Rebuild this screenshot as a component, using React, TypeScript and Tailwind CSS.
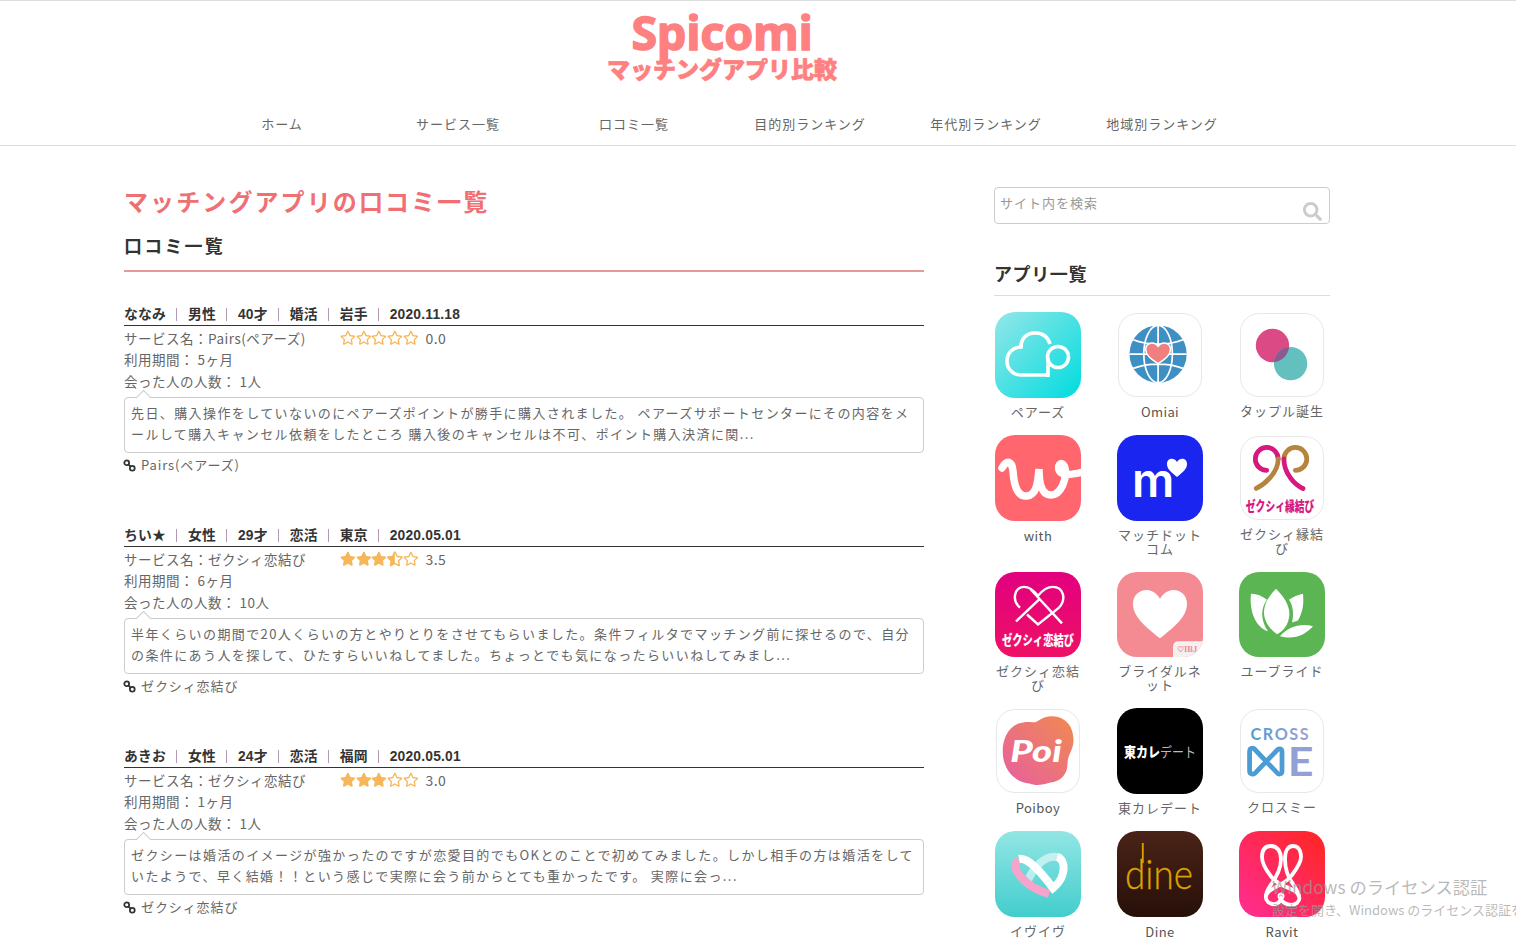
import type { FC, ReactNode } from "react";
import { FaRegStar, FaSearch, FaStar, FaStarHalfAlt } from "react-icons/fa";

const navItems = [
  "ホーム",
  "サービス一覧",
  "口コミ一覧",
  "目的別ランキング",
  "年代別ランキング",
  "地域別ランキング",
];

const reviews = [
  {
    meta: ["ななみ", "男性", "40才", "婚活", "岩手", "2020.11.18"],
    service: "Pairs(ペアーズ)",
    rating: 0,
    score: "0.0",
    period: "5ヶ月",
    people: "1人",
    body: "先日、購入操作をしていないのにペアーズポイントが勝手に購入されました。 ペアーズサポートセンターにその内容をメールして購入キャンセル依頼をしたところ 購入後のキャンセルは不可、ポイント購入決済に関...",
  },
  {
    meta: ["ちい★", "女性", "29才", "恋活", "東京", "2020.05.01"],
    service: "ゼクシィ恋結び",
    rating: 3.5,
    score: "3.5",
    period: "6ヶ月",
    people: "10人",
    body: "半年くらいの期間で20人くらいの方とやりとりをさせてもらいました。条件フィルタでマッチング前に探せるので、自分の条件にあう人を探して、ひたすらいいねしてました。ちょっとでも気になったらいいねしてみまし...",
  },
  {
    meta: ["あきお", "女性", "24才", "恋活", "福岡", "2020.05.01"],
    service: "ゼクシィ恋結び",
    rating: 3,
    score: "3.0",
    period: "1ヶ月",
    people: "1人",
    body: "ゼクシーは婚活のイメージが強かったのですが恋愛目的でもOKとのことで初めてみました。しかし相手の方は婚活をしていたようで、早く結婚！！という感じで実際に会う前からとても重かったです。 実際に会っ...",
  },
];

const Stars: FC<{ rating: number }> = ({ rating }) => (
  <div className="flex text-[#f5b75a]">
    {[1, 2, 3, 4, 5].map((n) => {
      if (rating >= n) return <FaStar key={n} className="h-[15.7px] w-[15.7px]" />;
      if (rating >= n - 0.5)
        return <FaStarHalfAlt key={n} className="h-[15.7px] w-[15.7px]" />;
      return <FaRegStar key={n} className="h-[15.7px] w-[15.7px]" />;
    })}
  </div>
);

const LinkIcon = () => (
  <svg viewBox="0 0 14 14" className="-ml-px h-[13px] w-[13px] shrink-0" fill="none" stroke="#333" strokeWidth="1.9">
    <circle cx="4" cy="4" r="2.6" />
    <circle cx="10" cy="10" r="2.6" />
    <path d="M5.4 5.4l3.2 3.2" />
  </svg>
);

const Review: FC<{ review: (typeof reviews)[number] }> = ({ review }) => (
  <article className="mb-[48.5px]">
    <div className="flex h-[23px] items-center border-b border-[#333] pt-px font-['Liberation_Sans','Noto_Sans_CJK_JP',sans-serif] text-[13.8px] leading-5 font-bold tracking-[0.2px] text-[#333]">
      {review.meta.map((m, i) => (
        <span key={i} className="flex items-center">
          {i > 0 && <span className="mr-[11px] ml-[10px] h-[13px] w-px bg-[#b59ab5]" />}
          {m}
        </span>
      ))}
    </div>
    <div className="pt-[1.5px] text-[13.5px] leading-[21.5px] tracking-[0.5px] text-[#666]">
      <div className="flex items-center">
        <span className="w-[216px]">サービス名：{review.service}</span>
        <Stars rating={review.rating} />
        <span className="ml-[7px] text-[14px]">{review.score}</span>
      </div>
      <div>利用期間： {review.period}</div>
      <div>会った人の人数： {review.people}</div>
    </div>
    <div className="relative mt-[4.5px] rounded border border-[#ccc] px-[6px] pt-[4px] pb-[7px] text-[13px] leading-[21.5px] tracking-[1.4px] text-[#666]">
      <span className="absolute -top-[6px] left-[13px] h-[11px] w-[11px] rotate-45 border-t border-l border-[#ccc] bg-white" />
      {review.body}
    </div>
    <div className="mt-[2px] flex h-[21px] items-center gap-[5px] text-[13px] tracking-[0.9px] text-[#666]">
      <LinkIcon />
      {review.service}
    </div>
  </article>
);

const AppIcon: FC<{ bordered?: boolean; short?: boolean; children: ReactNode }> = ({
  bordered,
  short,
  children,
}) => {
  let boxClass = "h-[86px] w-[86px] overflow-hidden rounded-[20px]";
  if (bordered) boxClass = "m-px h-[84px] w-[84px] overflow-hidden rounded-[19px] border border-[#e8e8e8] bg-white";
  if (short) boxClass = "h-[85px] w-[86px] overflow-hidden rounded-[20px]";
  return (
    <div className={boxClass}>
      <svg viewBox="0 0 86 86" preserveAspectRatio="none" className="h-full w-full">
        {children}
      </svg>
    </div>
  );
};

const apps: { name: string; bordered?: boolean; short?: boolean; icon: ReactNode }[] = [
  {
    name: "ペアーズ",
    icon: (
      <>
        <defs>
          <linearGradient id="pairsBg" x1="0" y1="0" x2="1" y2="1">
            <stop offset="0" stopColor="#94e6e8" />
            <stop offset="1" stopColor="#00dcdf" />
          </linearGradient>
        </defs>
        <rect width="86" height="86" fill="url(#pairsBg)" />
        <g fill="none" stroke="#fff" strokeWidth="3.6">
          <path d="M53 63H26C17 63 12 56 12 49C12 41 18 35 26 35C26 27 31 21 40 21C48 21 53 25 55 32" />
          <path d="M53 46V65" />
          <circle cx="63" cy="45" r="10.5" />
        </g>
      </>
    ),
  },
  {
    name: "Omiai",
    bordered: true,
    icon: (
      <>
        <circle cx="41" cy="42" r="30" fill="#3d8fc4" />
        <g fill="none" stroke="#fff" strokeWidth="1.8">
          <ellipse cx="41" cy="42" rx="15" ry="30" />
          <path d="M41 12V72M11 42H71M15 27C30 33 52 33 67 27M15 57C30 51 52 51 67 57" />
        </g>
        <path d="M41 52C33 47 28 43 28 37C28 30 37 28 41 34C45 28 54 30 54 37C54 43 49 47 41 52Z" fill="#f08080" stroke="#fff" strokeWidth="1.5" />
      </>
    ),
  },
  {
    name: "タップル誕生",
    bordered: true,
    icon: (
      <>
        <defs>
          <clipPath id="tappleClip">
            <circle cx="33" cy="33" r="17.5" />
          </clipPath>
        </defs>
        <circle cx="33" cy="33" r="17.5" fill="#db4a85" />
        <circle cx="52" cy="52" r="17.5" fill="#63c0bf" />
        <circle cx="52" cy="52" r="17.5" fill="#8b5a8f" clipPath="url(#tappleClip)" />
      </>
    ),
  },
  {
    name: "with",
    icon: (
      <>
        <rect width="86" height="86" fill="#ff666d" />
        <path
          d="M7 33C12 24 17 26 18 36C19 50 22 62 32 61C42 60 43 46 44 34C44 46 46 60 56 60C66 60 72 44 70 33C68 26 62 28 64 35C66 41 76 40 88 37"
          fill="none"
          stroke="#fff"
          strokeWidth="7.5"
          strokeLinecap="round"
        />
      </>
    ),
  },
  {
    name: "マッチドットコム",
    icon: (
      <>
        <rect width="86" height="86" fill="#1a25f0" />
        <text x="15" y="62" fill="#fff" fontSize="47" fontWeight="600" fontFamily="Inter, sans-serif">
          m
        </text>
        <path d="M60 42C54 37 50 34 50 29C50 23 57 22 60 27C63 22 70 23 70 29C70 34 66 37 60 42Z" fill="#fff" />
      </>
    ),
  },
  {
    name: "ゼクシィ縁結び",
    bordered: true,
    icon: (
      <>
        <g fill="none" strokeWidth="5" strokeLinecap="round">
          <path d="M27 35A12 12 0 1 1 39 23" stroke="#d6187f" />
          <path d="M16 54C24 50 39 38 39 23" stroke="#b5843f" />
          <path d="M57 35A12 12 0 1 0 45 23" stroke="#b5843f" />
          <path d="M65 54C56 50 45 38 45 23" stroke="#d6187f" />
        </g>
        <text
          x="5"
          y="78"
          fill="#d6187f"
          fontSize="14"
          fontWeight="900"
          textLength="72"
          lengthAdjust="spacingAndGlyphs"
          fontFamily="'Noto Sans CJK JP', sans-serif"
        >
          ゼクシィ縁結び
        </text>
      </>
    ),
  },
  {
    name: "ゼクシィ恋結び",
    short: true,
    icon: (
      <>
        <defs>
          <linearGradient id="koiBg" x1="0" y1="0" x2="0" y2="1">
            <stop offset="0" stopColor="#e2007f" />
            <stop offset="1" stopColor="#ee1166" />
          </linearGradient>
        </defs>
        <rect width="86" height="86" fill="url(#koiBg)" />
        <g fill="none" stroke="#fff" strokeWidth="2.4">
          <path d="M25 36C16 28 20 15 29 15C35 15 39 19 43 24C47 19 52 15 58 15C68 15 72 27 64 36L43 53L32 43" />
          <path d="M36 18L67 52" />
          <path d="M45 27L21 50" />
        </g>
        <text
          x="7"
          y="74"
          fill="#fff"
          fontSize="14"
          fontWeight="900"
          textLength="72"
          lengthAdjust="spacingAndGlyphs"
          fontFamily="'Noto Sans CJK JP', sans-serif"
        >
          ゼクシィ恋結び
        </text>
      </>
    ),
  },
  {
    name: "ブライダルネット",
    short: true,
    icon: (
      <>
        <rect width="86" height="86" fill="#f48a92" />
        <path d="M43 67C28 55 16 45 16 32C16 18 34 12 43 27C52 12 70 18 70 32C70 45 58 55 43 67Z" fill="#fff" />
        <rect x="56" y="70" width="34" height="20" rx="5" fill="#f4f0f0" />
        <text x="60" y="81" fill="#f48a92" fontSize="8.5" fontWeight="700" fontFamily="'Liberation Serif', serif">
          ♡IBJ
        </text>
      </>
    ),
  },
  {
    name: "ユーブライド",
    short: true,
    icon: (
      <>
        <rect width="86" height="86" fill="#5ab552" />
        <g fill="#fff">
          <path d="M37 17C46 26 52 36 50 46C49 54 44 60 38 63C31 58 25 50 25 41C25 32 30 24 37 17Z" />
          <path d="M12 22C20 22 25 26 28 28C22 36 21 48 29 60C17 56 10 40 12 22Z" />
          <path d="M64 22C65 32 64 40 59 49C57 50 55 50 53 51C55 42 54 34 50 28C54 25 59 23 64 22Z" />
          <path d="M74 55C66 64 55 69 41 65C48 56 62 51 74 55Z" />
        </g>
      </>
    ),
  },
  {
    name: "Poiboy",
    bordered: true,
    icon: (
      <>
        <defs>
          <linearGradient id="poiBg" x1="0" y1="1" x2="1" y2="0">
            <stop offset="0" stopColor="#e85ea0" />
            <stop offset="1" stopColor="#f08a50" />
          </linearGradient>
        </defs>
        <path
          d="M6 43C6 28 14 14 28 13C34 12 38 14 42 12C50 6 60 5 68 9C78 14 81 25 80 35C79 43 74 48 74 56C74 68 66 75 56 76C48 78 42 80 34 77C20 76 6 64 6 43Z"
          fill="url(#poiBg)"
        />
        <text
          x="14"
          y="55"
          fill="#fff"
          fontSize="32"
          fontWeight="900"
          fontStyle="italic"
          textLength="54"
          lengthAdjust="spacingAndGlyphs"
          fontFamily="Lato, sans-serif"
        >
          Poi
        </text>
      </>
    ),
  },
  {
    name: "東カレデート",
    icon: (
      <>
        <rect width="86" height="86" fill="#000" />
        <text
          x="7"
          y="49"
          fontSize="14"
          textLength="72"
          fontFamily="'Noto Sans CJK JP', sans-serif"
          lengthAdjust="spacingAndGlyphs"
        >
          <tspan fill="#fff" fontWeight="900">
            東カレ
          </tspan>
          <tspan fill="#bbb" fontWeight="400">
            デート
          </tspan>
        </text>
      </>
    ),
  },
  {
    name: "クロスミー",
    bordered: true,
    icon: (
      <>
        <defs>
          <linearGradient id="crossBg" x1="0" y1="0" x2="1" y2="0">
            <stop offset="0" stopColor="#4e9cd6" />
            <stop offset="1" stopColor="#a3a0d4" />
          </linearGradient>
        </defs>
        <text x="10" y="31" fill="url(#crossBg)" fontSize="17" fontWeight="700" textLength="61" fontFamily="Lato, sans-serif">
          CROSS
        </text>
        <path
          d="M12 40C9 40 9 42 9 44V64C9 68 14 68 16 65L37 43C39 40 43 40 43 44V64C43 68 39 68 37 65L16 43C14 40 12 40 12 40Z"
          fill="none"
          stroke="#4b9bd4"
          strokeWidth="5"
        />
        <text
          x="49"
          y="69"
          fill="#93a0d6"
          fontSize="43"
          fontWeight="700"
          textLength="27"
          lengthAdjust="spacingAndGlyphs"
          fontFamily="Lato, sans-serif"
        >
          E
        </text>
      </>
    ),
  },
  {
    name: "イヴイヴ",
    icon: (
      <>
        <defs>
          <linearGradient id="eveBg" x1="0" y1="0" x2="0" y2="1">
            <stop offset="0" stopColor="#92e6e4" />
            <stop offset="1" stopColor="#42cdcd" />
          </linearGradient>
        </defs>
        <rect width="86" height="86" fill="url(#eveBg)" />
        <g fill="none" strokeWidth="8">
          <path d="M32 52C38 36 50 24 62 26" stroke="#fff" strokeOpacity="0.55" />
          <path d="M24 29C13 36 30 56 54 63" stroke="#f7a3cb" />
          <path d="M24 28C34 26 48 44 58 57C72 46 71 28 62 26" stroke="#fff" />
        </g>
      </>
    ),
  },
  {
    name: "Dine",
    icon: (
      <>
        <defs>
          <linearGradient id="dineBg" x1="0" y1="0" x2="0" y2="1">
            <stop offset="0" stopColor="#4a2318" />
            <stop offset="1" stopColor="#271008" />
          </linearGradient>
        </defs>
        <rect width="86" height="86" fill="url(#dineBg)" />
        <text
          x="8"
          y="58"
          fill="#dba200"
          stroke="#dba200"
          strokeWidth="0.3"
          fontSize="41"
          fontWeight="300"
          textLength="68"
          lengthAdjust="spacingAndGlyphs"
          fontFamily="Lato, sans-serif"
        >
          dine
        </text>
        <path d="M25.8 12V32" stroke="#dba200" strokeWidth="1.8" />
      </>
    ),
  },
  {
    name: "Ravit",
    icon: (
      <>
        <defs>
          <linearGradient id="ravitBg" x1="0" y1="1" x2="1" y2="0">
            <stop offset="0" stopColor="#ff2d96" />
            <stop offset="1" stopColor="#ff2620" />
          </linearGradient>
        </defs>
        <rect width="86" height="86" fill="url(#ravitBg)" />
        <g fill="none" stroke="#fff" strokeWidth="3.8">
          <path d="M60 66C59 56 40 58 31 44C25 36 23 31 23 26C23 18 27 15 32 15C38 15 42 20 42 28C42 37 37 47 31 55C27 61 25 67 29 71C34 75 40 73 42 68C44 73 53 76 58 72C60 70 61 68 60 66" />
          <path d="M27 66C28 56 45 56 53 44C59 36 62 31 62 26C62 18 58 15 54 15C49 15 46 20 46 28C46 37 48 45 54 53C58 59 61 64 60 67" />
          <circle cx="42" cy="65" r="2.5" strokeWidth="2" />
        </g>
      </>
    ),
  },
];

export default function App() {
  return (
    <div className="relative h-[949px] overflow-hidden bg-white font-['Noto_Sans_CJK_JP',sans-serif]">
      <header className="border-y border-[#ddd]">
        <div className="ml-[194px] flex w-[1056px] flex-col items-center pt-[7px] pb-[9px]">
          <div className="h-[47px] font-['Noto_Sans',sans-serif] text-[46.5px] leading-[48px] font-bold text-[#ff8080] [-webkit-text-stroke:1.5px_#ff8080]">
            Spicomi
          </div>
          <div className="h-[26px] text-[23px] leading-[26px] font-black text-[#ff8080] [-webkit-text-stroke:0.7px_#ff8080]">
            マッチングアプリ比較
          </div>
          <nav className="mt-[31px] flex w-full">
            {navItems.map((item) => (
              <div
                key={item}
                className="flex h-[24px] w-[176px] items-center justify-center text-[13px] tracking-[1px] text-[#666]"
              >
                {item}
              </div>
            ))}
          </nav>
        </div>
      </header>

      <div className="ml-[124px] flex items-start">
        <main className="w-[800px] pt-[37px]">
          <h1 className="text-[24px] leading-[36px] font-bold tracking-[2.1px] text-[#f06f73]">
            マッチングアプリの口コミ一覧
          </h1>
          <h2 className="mt-[12px] border-b-2 border-[#e59999] pb-[11px] text-[18px] leading-[28px] font-bold tracking-[2.2px] text-[#333]">
            口コミ一覧
          </h2>
          <div className="mt-[31px]">
            {reviews.map((review) => (
              <Review key={review.meta[0]} review={review} />
            ))}
          </div>
        </main>

        <aside className="ml-[70px] w-[336px] pt-[41px]">
          <div className="relative h-[37px] rounded border border-[#ccc] px-[5px] pt-[4px] text-[13px] leading-[22px] tracking-[1px] text-[#999]">
            サイト内を検索
            <FaSearch className="absolute right-[7px] bottom-[2px] h-[19px] w-[19px] text-[#ccc]" />
          </div>
          <h3 className="mt-[36px] border-b border-[#ddd] pb-[9px] text-[18px] leading-[26px] font-bold tracking-[0.6px] text-[#333]">
            アプリ一覧
          </h3>
          <div className="mt-[16px] ml-px grid grid-cols-[86px_86px_86px] gap-x-[36px]">
            {apps.map((app) => (
              <div key={app.name}>
                <AppIcon bordered={app.bordered} short={app.short}>
                  {app.icon}
                </AppIcon>
                <div
                  className={
                    /^[A-Za-z]+$/.test(app.name)
                      ? "mt-[8px] mb-[15px] text-center text-[13px] leading-[14px] tracking-[0.4px] text-[#555]"
                      : "mt-[7px] mb-[16px] text-center text-[13px] leading-[14px] tracking-[1px] text-[#666]"
                  }
                >
                  {app.name}
                </div>
              </div>
            ))}
          </div>
        </aside>
      </div>

      <div className="absolute top-[875px] left-[1272px] whitespace-nowrap text-[#9a9a9a]/70">
        <div className="text-[17.3px] leading-[24px]">Windows のライセンス認証</div>
        <div className="text-[13px] leading-[22px]">設定を開き、Windows のライセンス認証を行ってください。</div>
      </div>
    </div>
  );
}
